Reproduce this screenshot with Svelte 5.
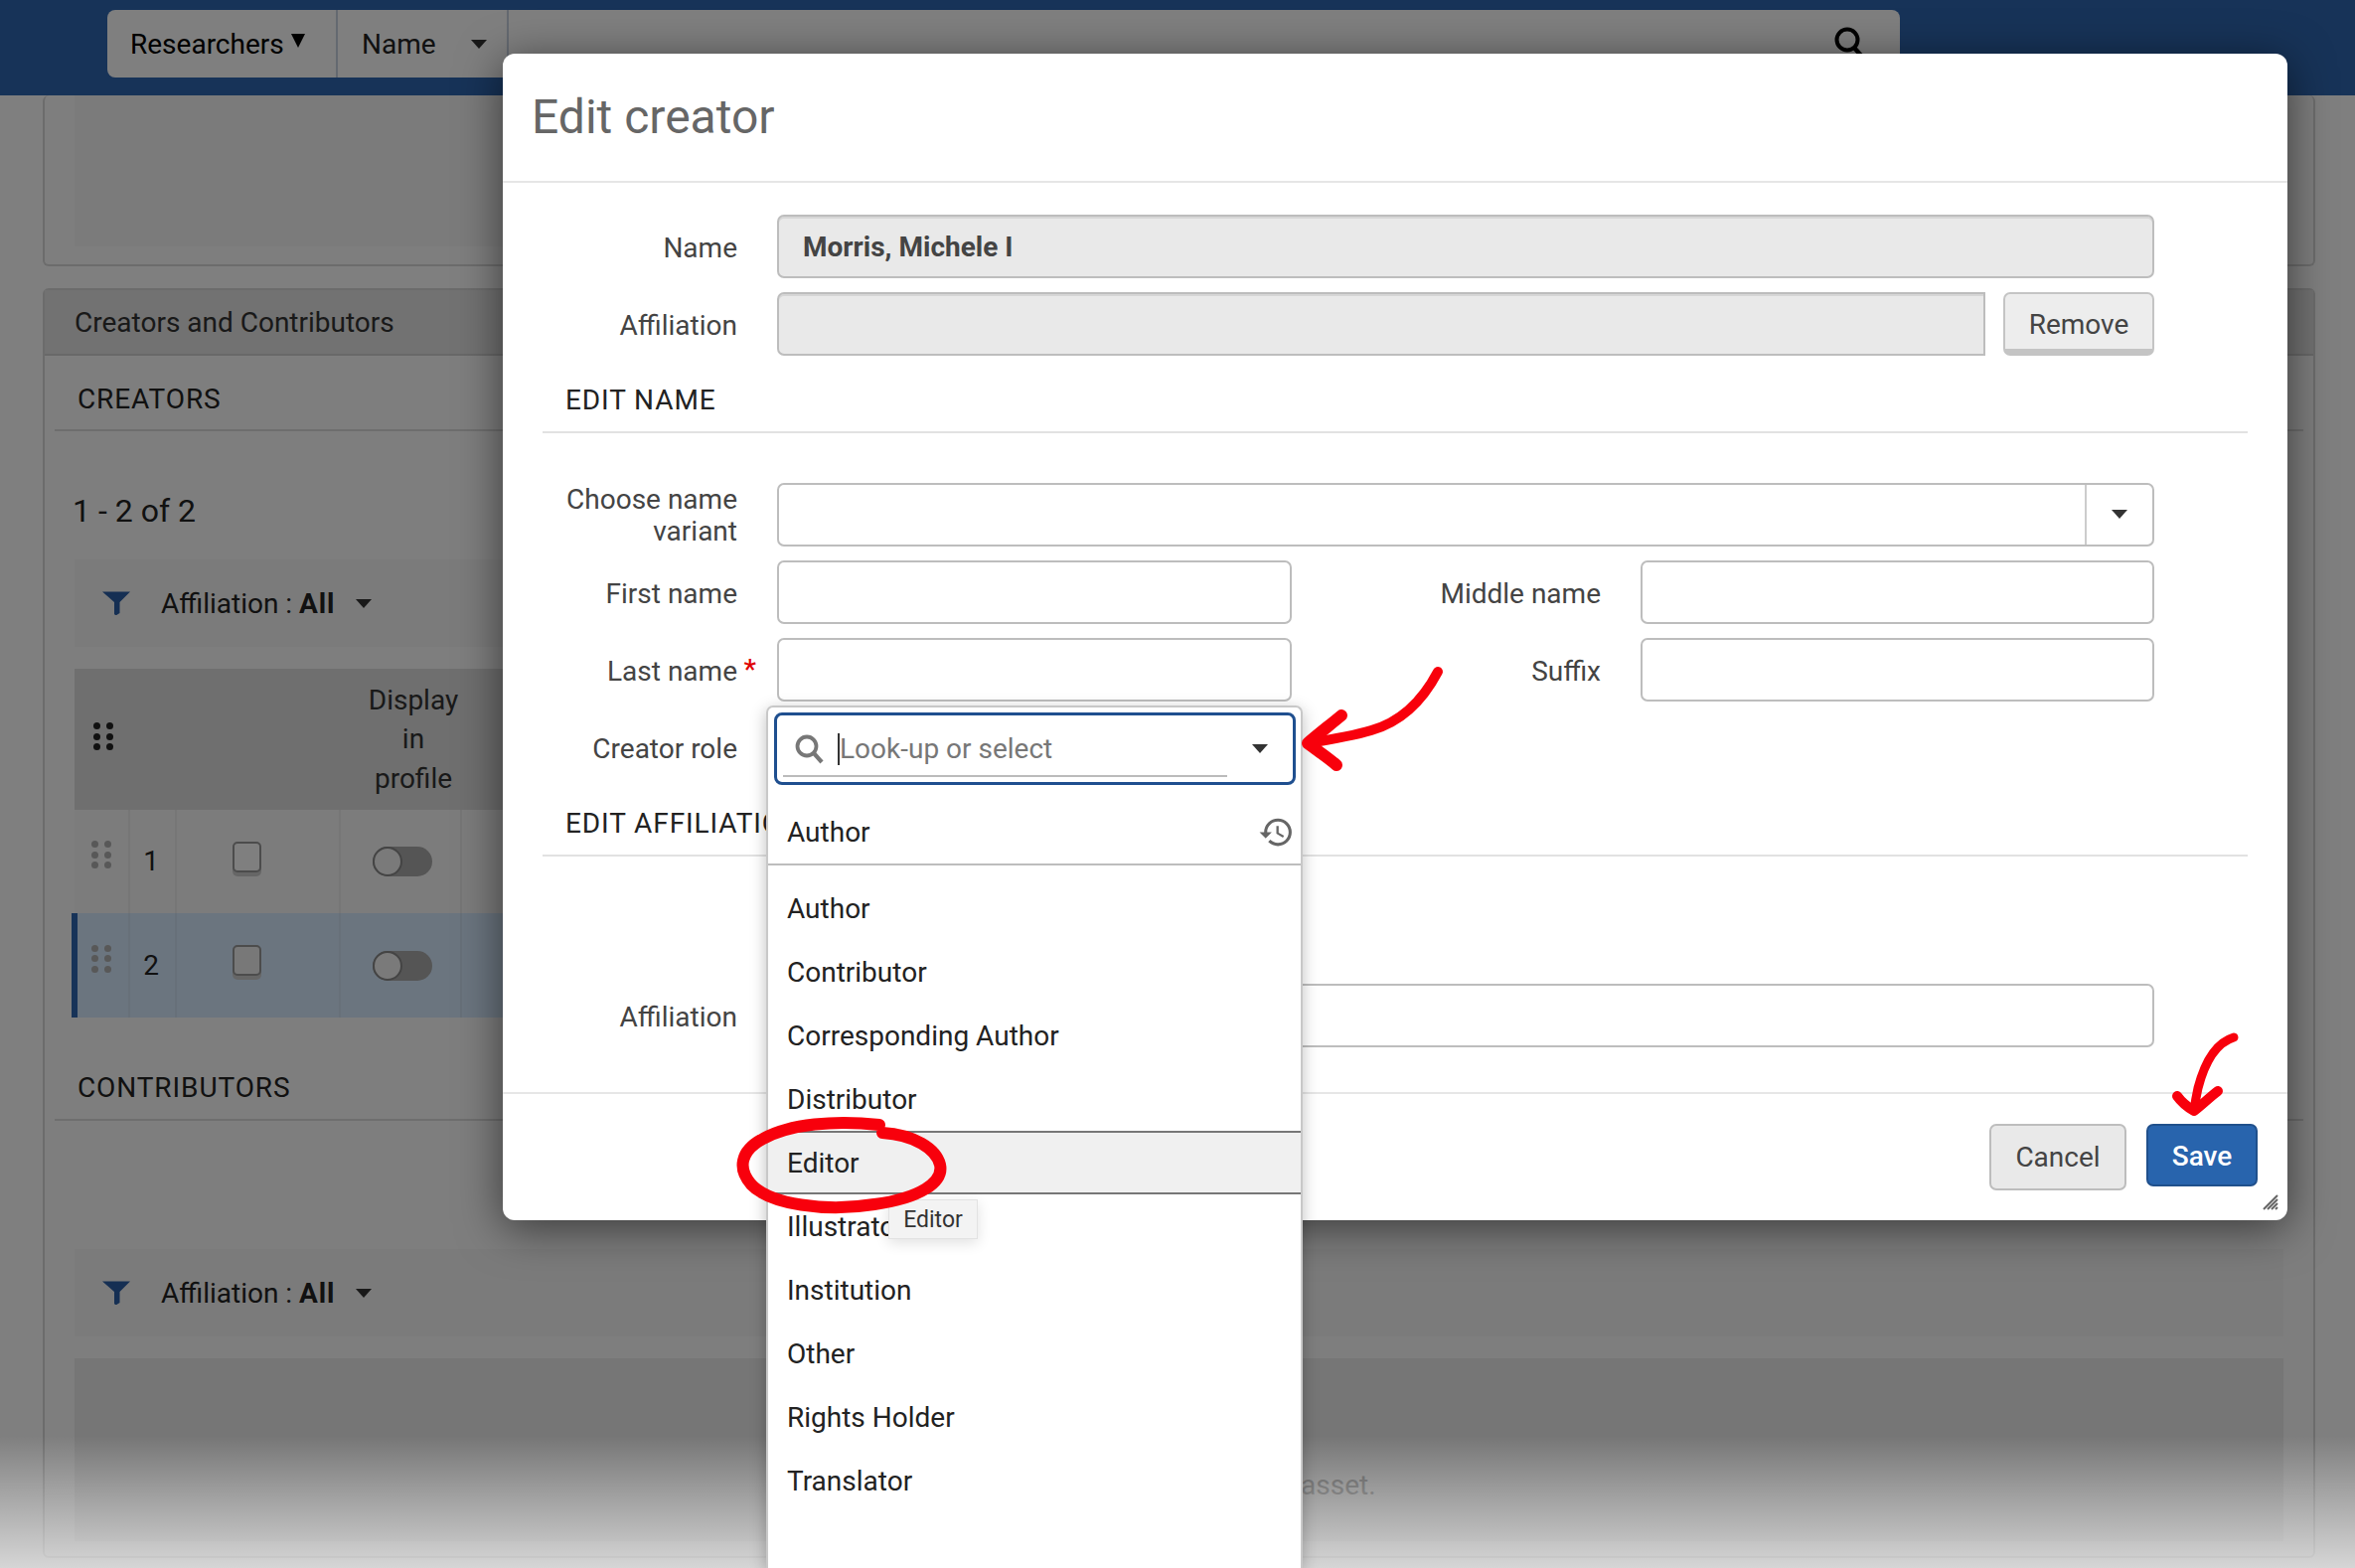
<script>
	const roles = ['Author', 'Contributor', 'Corresponding Author', 'Distributor', 'Editor', 'Illustrator', 'Institution', 'Other', 'Rights Holder', 'Translator'];
	const rows = [
		{ n: 1, on: false },
		{ n: 2, on: true }
	];
</script>

{#snippet dots(cls)}
	<span class="dots {cls}">
		{#each Array(6) as _}<i></i>{/each}
	</span>
{/snippet}

{#snippet filter()}
	<div class="filter">
		<svg class="funnel" viewBox="0 0 28 24" width="28" height="24"><path d="M0 0.5H28L17.5 11V22L13.5 24.5 12 23V11Z" fill="#2b5fa6" /></svg>
		<span>Affiliation : <b>All</b></span>
		<em class="tri small"></em>
	</div>
{/snippet}

<div class="app">
	<div class="page">
		<header>
			<div class="search">
				<div class="seg first">Researchers<em class="tri tiny"></em></div>
				<div class="seg second"><span>Name</span><em class="tri small"></em></div>
				<div class="grow"></div>
				<svg class="mag" viewBox="0 0 36 36" width="36" height="36"><circle cx="16" cy="13" r="10.5" fill="none" stroke="#000" stroke-width="4" /><path d="M23 21l8 9" stroke="#000" stroke-width="4.5" /></svg>
			</div>
		</header>

		<div class="main">
			<section class="panel top">
				<div class="block"></div>
			</section>

			<section class="panel creators">
				<div class="panel-head">Creators and Contributors</div>
				<div class="sub">CREATORS</div>
				<div class="count">1 - 2 of 2</div>
				{@render filter()}
				<div class="thead">
					<div class="th-dots">{@render dots('dark')}</div>
					<div class="th-label">Display<br />in<br />profile</div>
				</div>
				{#each rows as row (row.n)}
					<div class="tr" class:on={row.on}>
						<div class="td">{@render dots('grey')}</div>
						<div class="td num">{row.n}</div>
						<div class="td"><span class="check"></span></div>
						<div class="td"><span class="toggle"><i></i></span></div>
						<div class="td"></div>
					</div>
				{/each}
				<div class="sub contrib">CONTRIBUTORS</div>
				<div class="spaced">{@render filter()}</div>
				<div class="empty">asset.</div>
			</section>
		</div>
	</div>

	<div class="overlay"></div>
	<div class="fade"></div>

	<div class="modal">
		<div class="modal-head">Edit creator</div>
		<div class="modal-body">
			<div class="row">
				<label>Name</label>
				<div class="input off name">Morris, Michele I</div>
			</div>
			<div class="row">
				<label>Affiliation</label>
				<div class="with-btn">
					<div class="input off square"></div>
					<div class="remove">Remove</div>
				</div>
			</div>
			<div class="section">EDIT NAME</div>
			<div class="row tight">
				<label class="two">Choose name variant</label>
				<div class="input combo">
					<div class="combo-btn"><em class="tri small"></em></div>
				</div>
			</div>
			<div class="row split">
				<label>First name</label>
				<div class="input"></div>
				<label>Middle name</label>
				<div class="input"></div>
			</div>
			<div class="row split">
				<label>Last name<b class="req">*</b></label>
				<div class="input"></div>
				<label>Suffix</label>
				<div class="input"></div>
			</div>
			<div class="row">
				<label>Creator role</label>
				<div></div>
			</div>
			<div class="section second-section">EDIT AFFILIATION</div>
			<div class="row affil">
				<label>Affiliation</label>
				<div class="input"></div>
			</div>
		</div>
		<div class="modal-foot">
			<div class="btn cancel">Cancel</div>
			<div class="btn save">Save</div>
		</div>
		<svg class="grip" viewBox="0 0 16 16" width="16" height="16">
			<path d="M1 15L15 1M5 15L15 5M9 15L15 9M13 15L15 13" stroke="#666" stroke-width="2" />
		</svg>
	</div>

	<div class="drop">
		<div class="focus">
			<svg viewBox="0 0 30 30" width="30" height="30"><circle cx="12" cy="12" r="9.5" fill="none" stroke="#777" stroke-width="3.8" /><path d="M19 19l8 9" stroke="#777" stroke-width="4.2" /></svg>
			<span class="cursor"></span>
			<span class="ph">Look-up or select</span>
			<em class="tri small"></em>
		</div>
		<div class="recent">
			<span>Author</span>
			<svg viewBox="0 0 24 24" width="37" height="37"><path fill="#666" d="M13 3a9 9 0 0 0-9 9H1l3.89 3.89.07.14L9 12H6c0-3.87 3.13-7 7-7s7 3.13 7 7-3.13 7-7 7c-1.93 0-3.68-.79-4.94-2.06l-1.42 1.42A8.954 8.954 0 0 0 13 21a9 9 0 0 0 0-18zm-1 5v5l4.28 2.54.72-1.21-3.5-2.08V8H12z" /></svg>
		</div>
		<ul>
			{#each roles as role (role)}
				<li class:hover={role === 'Editor'}>{role}</li>
			{/each}
		</ul>
		<div class="tip">Editor</div>
	</div>

	<svg class="marks" viewBox="0 0 2370 1578" width="2370" height="1578" fill="none" stroke="#f8000c" stroke-linecap="round" stroke-linejoin="round">
		<path stroke-width="10" d="M1447 676C1428 712 1405 728 1380 735C1360 741 1335 745 1316 748" />
		<path stroke-width="12" d="M1350 720C1338 730 1325 740 1316 748C1325 755 1336 762 1345 770" />
		<path stroke-width="12" d="M885 1132C840 1127 795 1131 768 1146C745 1158 742 1176 756 1192C775 1212 830 1220 880 1212C925 1206 950 1190 946 1172C942 1156 920 1142 888 1140" />
		<path stroke-width="9" d="M2248 1044C2228 1050 2218 1072 2212 1095C2210 1104 2209 1110 2208 1118" />
		<path stroke-width="10" d="M2191 1103C2196 1110 2203 1115 2208 1118C2216 1112 2224 1104 2232 1098" />
	</svg>
</div>

<style>
	:global(body) {
		margin: 0;
		font-family: Roboto, 'Liberation Sans', sans-serif;
	}

	.app {
		position: relative;
		width: 2370px;
		height: 1578px;
		overflow: hidden;
		background: #fff;
		font-size: 28px;
		color: #333;
	}

	em {
		font-style: normal;
	}

	.tri {
		display: inline-block;
		width: 0;
		height: 0;
		border-style: solid;
		border-color: #333 transparent transparent;
	}

	.tri.small {
		border-width: 9px 8px 0;
	}

	.tri.tiny {
		border-width: 14px 7px 0;
		margin: 0 0 7px 7px;
		border-top-color: #000;
	}

	header {
		height: 96px;
		box-sizing: border-box;
		padding: 10px 0 0 108px;
		background: #2e66b0;
	}

	.search {
		display: flex;
		align-items: center;
		width: 1804px;
		height: 68px;
		background: #fff;
		border-radius: 8px;
	}

	.seg {
		height: 100%;
		display: flex;
		align-items: center;
		box-sizing: border-box;
		border-right: 2px solid #c9d3e0;
	}

	.seg.first {
		width: 232px;
		padding-left: 23px;
		color: #000;
	}

	.seg.second {
		width: 172px;
		padding: 0 20px 0 24px;
		justify-content: space-between;
		color: #222;
	}

	.grow {
		flex: 1;
	}

	.mag {
		margin: 17px 33px 0 0;
		align-self: flex-start;
	}

	.main {
		padding: 0 40px 0 43px;
	}

	.panel {
		box-sizing: border-box;
		border: 2px solid #d8d8d8;
		border-radius: 6px;
		background: #fcfcfc;
	}

	.panel.top {
		height: 172px;
		border-top: none;
		padding: 0 30px 18px;
	}

	.block {
		height: 100%;
		background: #f6f6f6;
	}

	.panel.creators {
		height: 1278px;
		margin-top: 22px;
	}

	.panel-head {
		height: 64px;
		display: flex;
		align-items: center;
		padding-left: 30px;
		background: #e4e4e4;
		border-bottom: 2px solid #d0d0d0;
		color: #333;
	}

	.sub {
		height: 76px;
		margin: 0 10px;
		padding: 12px 0 0 23px;
		display: flex;
		align-items: center;
		box-sizing: border-box;
		border-bottom: 2px solid #dcdcdc;
		color: #222;
		letter-spacing: 0.9px;
	}

	.sub.contrib {
		height: 104px;
		align-items: flex-end;
		padding-bottom: 15px;
	}

	.count {
		height: 129px;
		box-sizing: border-box;
		padding: 30px 0 0 28px;
		display: flex;
		align-items: center;
		font-size: 32px;
		color: #222;
	}

	.filter {
		display: flex;
		align-items: center;
		height: 88px;
		margin: 0 30px;
		padding-left: 28px;
		background: #f6f6f6;
		color: #222;
	}

	.filter span {
		margin: 0 21px 0 31px;
	}

	.filter b {
		font-weight: 700;
		letter-spacing: 0.8px;
	}

	.funnel {
		display: block;
	}

	.spaced {
		margin-top: 129px;
	}

	.thead {
		display: grid;
		grid-template-columns: 268px 146px;
		height: 142px;
		margin: 22px 30px 0;
		background: #dedede;
		align-items: center;
	}

	.th-dots {
		padding: 0 0 6px 19px;
	}

	.th-label {
		text-align: center;
		line-height: 39.5px;
		color: #333;
	}

	.dots {
		display: grid;
		grid-template-columns: repeat(2, 7px);
		grid-auto-rows: 7px;
		column-gap: 6px;
		row-gap: 3.5px;
		width: 20px;
	}

	.dots i {
		border-radius: 50%;
		background: #222;
	}

	.dots.grey i {
		background: #b0b0b0;
	}

	.tr {
		display: grid;
		grid-template-columns: 56px 47px 165px 122px 1fr;
		height: 104px;
		margin: 0 30px;
		background: #f8f8f8;
		position: relative;
	}

	.tr.on {
		height: 105px;
		background: #d6eaff;
	}

	.tr.on::before {
		content: '';
		position: absolute;
		left: -3px;
		top: 0;
		bottom: 0;
		width: 6px;
		background: #2e66b0;
	}

	.td {
		border-right: 2px solid #ededed;
		display: flex;
		align-items: center;
		justify-content: center;
	}

	.tr.on .td {
		border-right-color: #cfe0f3;
	}

	.td .dots {
		margin-top: -14px;
	}

	.num {
		padding: 0 3px 1px 0;
		color: #222;
	}

	.check {
		display: block;
		width: 25px;
		height: 27px;
		margin: -10px 22px 0 0;
		border: 2px solid #999;
		border-radius: 5px;
		background: #fff;
		box-shadow: 0 4px 0 #ccc;
	}

	.tr.on .check {
		background: #f0f0f0;
	}

	.toggle {
		display: block;
		position: relative;
		width: 60px;
		height: 30px;
		margin-left: 3px;
		border-radius: 15px;
		background: #aaa;
	}

	.toggle i {
		position: absolute;
		left: 0;
		top: 0;
		width: 26px;
		height: 26px;
		border: 2px solid #888;
		border-radius: 50%;
		background: #f4f4f4;
	}

	.empty {
		margin: 22px 30px 0;
		height: 184px;
		box-sizing: border-box;
		padding: 111px 0 0 1234px;
		background: #ececec;
		color: #999;
	}

	.overlay {
		position: absolute;
		inset: 0;
		background: rgba(0, 0, 0, 0.5);
	}

	.modal {
		position: absolute;
		left: 506px;
		top: 54px;
		width: 1796px;
		height: 1174px;
		display: flex;
		flex-direction: column;
		background: #fff;
		border-radius: 12px;
		box-shadow: 0 8px 45px rgba(0, 0, 0, 0.55);
	}

	.modal-head {
		height: 130px;
		box-sizing: border-box;
		display: flex;
		align-items: center;
		padding: 0 0 2px 29px;
		border-bottom: 2px solid #e6e6e6;
		font-size: 48px;
		color: #666;
	}

	.modal-body {
		flex: 1;
		padding-top: 32px;
	}

	.row {
		display: grid;
		grid-template-columns: 276px 1386px;
		align-items: center;
		min-height: 64px;
		margin-bottom: 14px;
	}

	.row.tight {
		margin-bottom: 13px;
	}

	.row.split {
		grid-template-columns: 276px 518px 351px 517px;
	}

	label {
		display: block;
		text-align: right;
		padding: 3px 40px 0 0;
		color: #444;
		line-height: 32px;
		position: relative;
	}

	.row.split label:nth-child(3) {
		padding-right: 40px;
	}

	.req {
		position: absolute;
		right: 21px;
		top: 1px;
		color: #e00000;
		font-weight: 500;
	}

	.input {
		height: 64px;
		box-sizing: border-box;
		border: 2.5px solid #bdbdbd;
		border-radius: 7px;
		background: #fff;
	}

	.input.off {
		background: #e9e9e9;
		box-shadow: inset 0 2px 0 #d6d6d6;
	}

	.input.name {
		display: flex;
		align-items: center;
		padding-left: 24px;
		font-weight: 700;
		color: #444;
	}

	.with-btn {
		display: flex;
		gap: 18px;
	}

	.input.square {
		flex: 1;
		border-radius: 7px 0 0 7px;
	}

	.remove {
		width: 152px;
		height: 64px;
		box-sizing: border-box;
		display: flex;
		align-items: center;
		justify-content: center;
		padding-top: 5px;
		border: 2px solid #c4c4c4;
		border-bottom-width: 7px;
		border-radius: 7px;
		background: #ededed;
		color: #444;
	}

	.section {
		height: 78px;
		box-sizing: border-box;
		margin: -14px 40px 48px;
		padding: 12px 0 0 23px;
		display: flex;
		align-items: center;
		border-bottom: 2px solid #e2e2e2;
		color: #222;
		letter-spacing: 0.9px;
	}

	.second-section {
		margin-bottom: 128px;
	}

	.input.combo {
		display: flex;
		justify-content: flex-end;
	}

	.combo-btn {
		width: 66px;
		display: flex;
		align-items: center;
		justify-content: center;
		border-left: 2px solid #ccc;
	}

	.modal-foot {
		height: 129px;
		box-sizing: border-box;
		display: flex;
		justify-content: flex-end;
		gap: 20px;
		padding: 30px 30px 0 0;
		border-top: 2px solid #e6e6e6;
	}

	.btn {
		display: flex;
		align-items: center;
		justify-content: center;
		box-sizing: border-box;
		border-radius: 7px;
	}

	.cancel {
		width: 138px;
		height: 67px;
		border: 2.5px solid #bdbdbd;
		background: #e9e9e9;
		color: #444;
	}

	.save {
		width: 112px;
		height: 63px;
		padding-top: 2px;
		border: 2px solid #20508c;
		background: #2864ad;
		color: #fff;
		font-weight: 500;
	}

	.grip {
		position: absolute;
		right: 9px;
		bottom: 10px;
	}

	.drop {
		position: absolute;
		left: 771px;
		top: 710px;
		width: 540px;
		height: 868px;
		box-sizing: border-box;
		border: 2px solid #c8c8c8;
		border-bottom: none;
		border-radius: 7px 7px 0 0;
		background: #fff;
		box-shadow: 0 4px 16px rgba(0, 0, 0, 0.25);
		color: #222;
	}

	.focus {
		position: absolute;
		left: 6px;
		top: 5px;
		width: 525px;
		height: 73px;
		box-sizing: border-box;
		display: flex;
		align-items: center;
		padding-left: 18px;
		border: 3.5px solid #1f4f8f;
		border-radius: 8px;
	}

	.focus::after {
		content: '';
		position: absolute;
		left: 6px;
		right: 66px;
		bottom: 5px;
		height: 2px;
		background: #bbb;
	}

	.cursor {
		width: 2px;
		height: 32px;
		margin: 0 0 0 13px;
		background: #333;
	}

	.ph {
		flex: 1;
		color: #777;
	}

	.focus .tri {
		margin-right: 25px;
	}

	.recent {
		position: absolute;
		left: 0;
		right: 0;
		top: 93px;
		height: 66px;
		box-sizing: border-box;
		display: flex;
		align-items: center;
		justify-content: space-between;
		padding: 0 6px 0 19px;
		border-bottom: 2px solid #bdbdbd;
	}

	ul {
		list-style: none;
		margin: 0;
		padding: 0;
		position: absolute;
		left: 0;
		right: 0;
		top: 170px;
	}

	li {
		height: 64px;
		box-sizing: border-box;
		display: flex;
		align-items: center;
		padding-left: 19px;
	}

	li.hover {
		background: #f0f0f0;
		border-top: 2px solid #777;
		border-bottom: 2px solid #777;
	}

	.tip {
		position: absolute;
		left: 121px;
		top: 495px;
		width: 90px;
		height: 40px;
		box-sizing: border-box;
		display: flex;
		align-items: center;
		justify-content: center;
		background: #f3f3f3;
		border: 1px solid #e2e2e2;
		box-shadow: 0 4px 14px rgba(0, 0, 0, 0.12);
		font-size: 23px;
		color: #333;
	}

	.marks {
		position: absolute;
		left: 0;
		top: 0;
		pointer-events: none;
	}

	.fade {
		position: absolute;
		left: 0;
		right: 0;
		top: 1445px;
		bottom: 0;
		background: linear-gradient(rgba(255, 255, 255, 0), rgba(255, 255, 255, 0.68));
		pointer-events: none;
	}
</style>
